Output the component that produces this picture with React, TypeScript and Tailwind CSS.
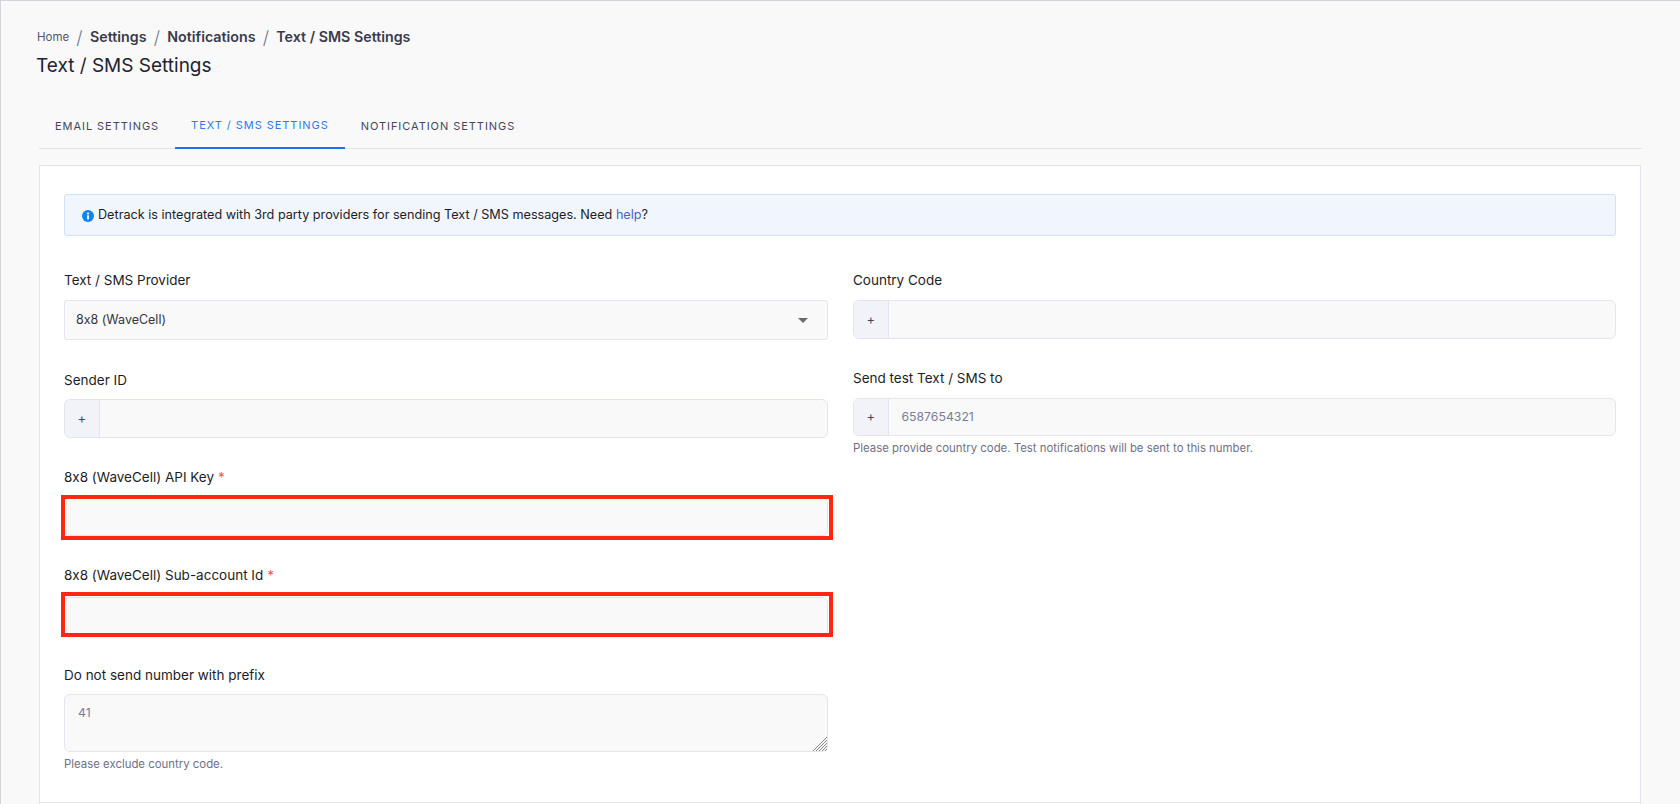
function Label({ children, required }: { children: React.ReactNode; required?: boolean }) {
  return (
    <div className="text-[13.5px] leading-[20px] text-[#1d1d26]">
      {children}
      {required && <span className="ml-1 text-[#f5525c]">*</span>}
    </div>
  );
}

function PlusInput({ placeholder, height = "h-[39px]" }: { placeholder?: string; height?: string }) {
  return (
    <div className={`flex ${height} rounded-[6px] border border-[#e3e4ef] bg-[#f9f9fa] text-[12.25px]`}>
      <div className="flex w-[34.5px] items-center justify-center rounded-l-[6px] border-r border-[#e3e4ef] bg-[#f1f3f8] text-[13px] text-[#4a4a5e]">+</div>
      <div className="flex items-center pl-[13px] text-[#7c7c96]">{placeholder}</div>
    </div>
  );
}

// red annotation sits over the input, not quite centred on it
function RequiredInput({ overlay }: { overlay: string }) {
  return (
    <div className="relative h-[39px] rounded-[6px] border border-[#e3e4ef] bg-[#f9f9fa]">
      <div className={`absolute -left-[4px] -right-[6px] ${overlay} border-[4px] border-[#ff2712]`} />
    </div>
  );
}

export default function App() {
  return (
    <div className="h-[804px] overflow-hidden border-l border-t border-[#d3d3dc] bg-[#f9f9fa] font-[Inter,sans-serif] [font-variant-ligatures:no-contextual]">
      <div className="px-[35px] pt-[27px]">
        <div className="flex h-[18px] items-center text-[14.25px] font-semibold text-[#3a3b4d]">
          <span className="ml-[1px] mt-[2px] text-[11.5px] font-normal text-[#55566b]">Home</span>
          <span className="ml-[7px] mr-[7.5px] text-[18px] font-light text-[#77788c]">/</span>
          <span>Settings</span>
          <span className="mx-[7.25px] text-[18px] font-light text-[#77788c]">/</span>
          <span>Notifications</span>
          <span className="mx-[7.25px] text-[18px] font-light text-[#77788c]">/</span>
          <span>Text / SMS Settings</span>
        </div>
        <h1 className="mt-[6px] text-[19px] font-normal leading-[28px] text-[#22232f]">Text / SMS Settings</h1>
      </div>

      <div className="mx-[38px] mt-[24px] flex h-[45px] border-b border-[#e5e3e6] text-[11px] tracking-[0.95px] text-[#45465a]">
        <div className="flex items-center px-[16px]">EMAIL SETTINGS</div>
        <div className="-mb-px flex items-center border-b-2 border-[#1f6fef] px-[16px] text-[#2f7af0]">TEXT / SMS SETTINGS</div>
        <div className="flex items-center px-[16px]">NOTIFICATION SETTINGS</div>
      </div>

      <div className="ml-[38px] mr-[39px] mt-[16px] h-[700px] border border-[#e2e3f0] bg-white">
        <div className="h-[637px] border-b border-[#e2e3f0] px-[24px] pt-[28px]">
          <div className="flex h-[42px] items-center rounded-[3px] border border-[#cfe2fb] bg-[#f1f6fe] pl-[17px] text-[12.65px] text-[#1d1d26]">
            <svg viewBox="0 0 16 16" className="mr-[4px] mt-[2px] h-[12px] w-[12px]">
              <circle cx="8" cy="8" r="8" fill="#1285ee" />
              <rect x="6.8" y="7" width="2.4" height="5.5" fill="#fff" />
              <circle cx="8" cy="4.6" r="1.4" fill="#fff" />
            </svg>
            <span>
              Detrack is integrated with 3rd party providers for sending Text / SMS messages. Need{" "}
              <span className="text-[#4a5fc7]">help</span>?
            </span>
          </div>

          <div className="mt-[34px] flex gap-[25px]">
            <div className="w-[764px]">
              <Label>Text / SMS Provider</Label>
              <div className="relative mt-[10px] flex h-[40px] items-center rounded-[3px] border border-[#e3e4ef] bg-[#f9f9fa] pl-[11px] text-[12.5px] text-[#33343f]">
                8x8 (WaveCell)
                <div className="absolute right-[19px] top-[17px] h-0 w-0 border-x-[5px] border-t-[5px] border-x-transparent border-t-[#6b6b6b]" />
              </div>

              <div className="mt-[30px]">
                <Label>Sender ID</Label>
              </div>
              <div className="mt-[9px]">
                <PlusInput />
              </div>

              <div className="mt-[29px]">
                <Label required>8x8 (WaveCell) API Key</Label>
              </div>
              <div className="mt-[10px]">
                <RequiredInput overlay="-top-[3px] -bottom-[5px]" />
              </div>

              <div className="mt-[29px]">
                <Label required>8x8 (WaveCell) Sub-account Id</Label>
              </div>
              <div className="mt-[12px]">
                <RequiredInput overlay="-top-[6px] -bottom-[2px]" />
              </div>

              <div className="mt-[29px]">
                <Label>Do not send number with prefix</Label>
              </div>
              <div className="relative mt-[9px] h-[58px] rounded-[6px] border border-[#e3e4ef] bg-[#f9f9fa] px-[13px] py-[9px] text-[12.25px] text-[#7c7c96]">
                41
                <svg viewBox="0 0 14 14" className="absolute bottom-0 right-0 h-[14px] w-[14px]" stroke="#777" strokeWidth="0.9">
                  <path d="M14 0L0 14M14 3L3 14M14 6L6 14M14 9L9 14M14 12L12 14" />
                </svg>
              </div>
              <div className="mt-[4px] text-[11.4px] leading-[16px] text-[#6f7085]">Please exclude country code.</div>
            </div>

            <div className="flex-1">
              <Label>Country Code</Label>
              <div className="mt-[10px]">
                <PlusInput />
              </div>
              <div className="mt-[29px]">
                <Label>Send test Text / SMS to</Label>
              </div>
              <div className="mt-[10px]">
                <PlusInput placeholder="6587654321" height="h-[38px]" />
              </div>
              <div className="mt-[4px] text-[11.4px] leading-[16px] text-[#6f7085]">
                Please provide country code. Test notifications will be sent to this number.
              </div>
            </div>
          </div>
        </div>
      </div>
    </div>
  );
}
